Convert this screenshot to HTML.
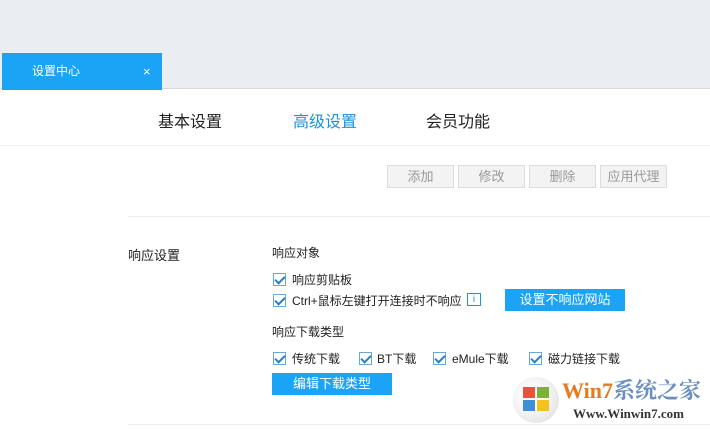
<!DOCTYPE html>
<html><head><meta charset="utf-8"><style>
*{margin:0;padding:0;box-sizing:border-box}
body{width:710px;height:429px;overflow:hidden;background:#fff;font-family:"Liberation Sans","Noto Sans CJK SC",sans-serif;position:relative;color:#333}
.a{position:absolute;white-space:nowrap}
.top{left:0;top:0;width:710px;height:89px;background:#eaedf1;border-bottom:1px solid #d5d8dc}
.tab{left:2px;top:53px;width:160px;height:37px;background:#1ba3f5;color:#fff;font-size:12px;line-height:37px;padding-left:30px}
.nav{top:108px;font-size:16px;color:#222}
.hl{left:0;width:710px;height:1px;background:#eceff2}
.gb{top:165px;height:23px;width:67px;border:1px solid #dcdcdc;background:#f3f3f3;color:#999;font-size:13px;line-height:21px;text-align:center}
.t{font-size:12px;color:#222}
.cb{width:13px;height:13px;border:1px solid #6aa6d6;background:#fff}
.cb:after{content:"";position:absolute;left:3px;top:0px;width:4px;height:8px;border:solid #2a7fc6;border-width:0 2px 2px 0;transform:rotate(45deg)}
.bb{background:#1ba3f5;color:#fff;font-size:13px;text-align:center;line-height:22px;height:22px;width:120px}
</style></head><body>
<div class="a top"></div>
<div class="a tab">设置中心<span style="position:absolute;left:141px;font-size:13px">×</span></div>
<div class="a nav" style="left:158px">基本设置</div>
<div class="a nav" style="left:293px;color:#1a93db">高级设置</div>
<div class="a nav" style="left:426px">会员功能</div>
<div class="a hl" style="top:145px"></div>
<div class="a gb" style="left:387px">添加</div>
<div class="a gb" style="left:458px">修改</div>
<div class="a gb" style="left:529px">删除</div>
<div class="a gb" style="left:600px">应用代理</div>
<div class="a hl" style="top:216px;left:128px;width:582px"></div>
<div class="a t" style="left:128px;top:245px;font-size:13px">响应设置</div>
<div class="a t" style="left:272px;top:244px">响应对象</div>
<div class="a cb" style="left:273px;top:273px"></div><div class="a t" style="left:292px;top:271px">响应剪贴板</div>
<div class="a cb" style="left:273px;top:294px"></div><div class="a t" style="left:292px;top:292px">Ctrl+鼠标左键打开连接时不响应</div>
<div class="a" style="left:467px;top:293px;width:14px;height:13px;border:1px solid #1a93db;color:#1a93db;font-size:10px;line-height:11px;text-align:center">i</div>
<div class="a bb" style="left:505px;top:289px">设置不响应网站</div>
<div class="a t" style="left:272px;top:323px">响应下载类型</div>
<div class="a cb" style="left:273px;top:352px"></div><div class="a t" style="left:292px;top:350px">传统下载</div>
<div class="a cb" style="left:359px;top:352px"></div><div class="a t" style="left:377px;top:350px">BT下载</div>
<div class="a cb" style="left:433px;top:352px"></div><div class="a t" style="left:452px;top:350px">eMule下载</div>
<div class="a cb" style="left:529px;top:352px"></div><div class="a t" style="left:548px;top:350px">磁力链接下载</div>
<div class="a bb" style="left:272px;top:373px">编辑下载类型</div>
<div class="a hl" style="top:424px;left:128px;width:582px"></div>
<div class="a" style="left:513px;top:377px;width:46px;height:46px;border-radius:50%;background:radial-gradient(circle at 40% 40%,#fff 20%,#e8e8e8 70%,#ccc);"></div>
<div class="a" style="left:523px;top:387px;width:12px;height:11px;background:#e8533a"></div><div class="a" style="left:537px;top:387px;width:12px;height:11px;background:#7bb33a"></div>
<div class="a" style="left:523px;top:400px;width:12px;height:11px;background:#3d8fd6"></div><div class="a" style="left:537px;top:400px;width:12px;height:11px;background:#f4c21c"></div>
<div class="a" style="left:562px;top:374px;font-size:22px;font-weight:bold;color:#e87a1e;font-family:'Liberation Serif','Noto Serif CJK SC',serif">Win7<span style="color:#6a8fc0">系统之家</span></div>
<div class="a" style="left:573px;top:406px;font-size:13px;font-weight:bold;color:#333;font-family:'Liberation Serif',serif">Www.Winwin7.com</div>
</body></html>
